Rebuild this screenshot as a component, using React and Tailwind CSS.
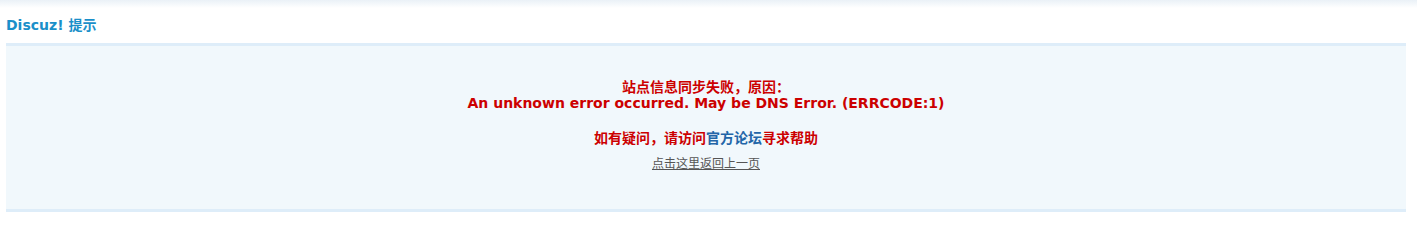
export default function App() {
  return (
    <div className="relative h-[220px] w-[1417px] bg-white font-['DejaVu_Sans','Noto_Sans_CJK_SC',sans-serif]">
      <div className="h-[8px] bg-gradient-to-b from-[#eaf1f7] to-white" />
      <div className="px-[6px] pt-[9px]">
        <h3 className="h-[26px] text-[14px] leading-[16px] font-bold text-[#1a8fc9]">Discuz! 提示</h3>
        <div className="w-[1400px] border-y-[3px] border-[#deedf9] bg-[#f1f8fc] pt-[33px] pb-[37px] text-center text-[12px] leading-[16px]">
          <p className="text-[14px] font-bold text-[#cc0000]">
            站点信息同步失败，原因：
            <br />
            An unknown error occurred. May be DNS Error. (ERRCODE:1)
          </p>
          <p className="mt-[19px] text-[14px] font-bold text-[#cc0000]">
            如有疑问，请访问<a href="#" className="text-[#2366a8]">官方论坛</a>寻求帮助
          </p>
          <p className="mt-[10px]">
            <a href="#" className="text-[#555] underline">点击这里返回上一页</a>
          </p>
        </div>
      </div>
    </div>
  )
}
